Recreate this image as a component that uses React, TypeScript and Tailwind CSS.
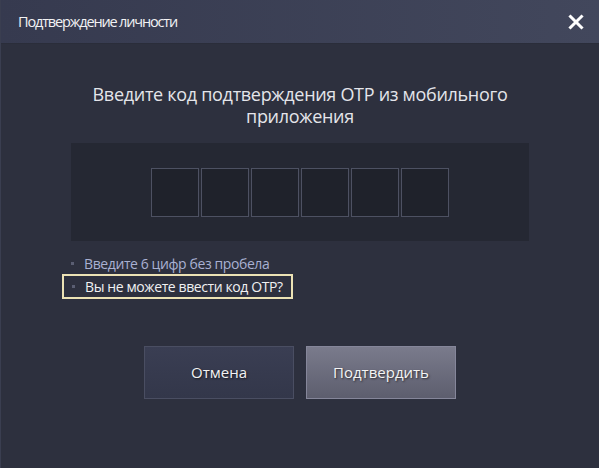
import React from "react";

export default function App() {
  const boxes = [0, 1, 2, 3, 4, 5];
  return (
    <div
      className="w-[599px] h-[468px] bg-[#2d303e] flex flex-col overflow-hidden border-l border-[#3a3e50]"
      style={{ fontFamily: '"Open Sans", "Noto Sans", sans-serif' }}
    >
      <div className="h-[44px] shrink-0 flex items-center justify-between pl-[17px] pr-[15px] bg-gradient-to-r from-[#363a4f] to-[#42475c] border-b border-[#2a2d3a]">
        <span className="text-[14.5px] text-[#f2f2f4] tracking-[-1.15px]">Подтверждение личности</span>
        <svg width="16" height="16" viewBox="0 0 16 16" className="mt-[1px]">
          <path d="M2.5 2.5 L13.5 13.5 M13.5 2.5 L2.5 13.5" stroke="#ffffff" strokeWidth="3" strokeLinecap="square" />
        </svg>
      </div>
      <div className="flex flex-col items-center pt-[39px]">
        <div className="text-[18px] leading-[22px] text-[#e4e5ea] text-center w-[460px] tracking-[-0.3px]">
          Введите код подтверждения OTP из мобильного приложения
        </div>
      </div>
      <div className="mx-[70px] mt-[16px] h-[98px] bg-[#252833] flex items-center justify-center gap-[2px]">
        {boxes.map((b) => (
          <div key={b} className="w-[48px] h-[49px] border border-[#4d5162] bg-[#1f222b]" />
        ))}
      </div>
      <div className="ml-[61px] mt-[12px] flex flex-col">
        <div className="flex items-center h-[20px] pl-[9px] text-[14px] text-[#a9b0d2] tracking-[-0.4px]">
          <span className="w-[3px] h-[3px] bg-[#5a5e72] mr-[10px]" />
          Введите 6 цифр без пробела
        </div>
        <div className="mt-[1px] self-start flex items-center h-[25px] pl-[8px] pr-[8px] border-2 border-[#ece2b4] text-[14px] text-[#f0f0f2] tracking-[-0.4px]">
          <span className="w-[3px] h-[3px] bg-[#5a5e72] mr-[10px]" />
          Вы не можете ввести код OTP?
        </div>
      </div>
      <div className="mt-[47px] flex justify-center gap-[12px]">
        <button className="w-[150px] h-[53px] bg-gradient-to-b from-[#3a3e53] to-[#33374a] border border-[#4a4e62] text-[15px] text-[#f2f2f2] [text-shadow:1px_1px_2px_rgba(0,0,0,0.6)]">
          Отмена
        </button>
        <button className="w-[150px] h-[53px] bg-gradient-to-b from-[#7a7b8c] to-[#5d5e6e] border border-[#85869a] text-[15px] text-[#f4f4f4] [text-shadow:1px_1px_2px_rgba(0,0,0,0.6)]">
          Подтвердить
        </button>
      </div>
    </div>
  );
}
